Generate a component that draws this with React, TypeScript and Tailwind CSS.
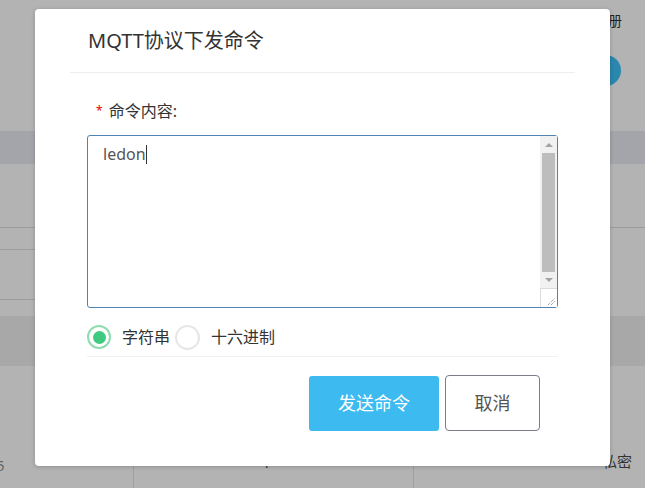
import React from "react";

const font = { fontFamily: '"Noto Sans", "Noto Sans CJK SC", sans-serif' };

export default function App() {
  return (
    <div className="relative w-[645px] h-[488px] overflow-hidden bg-[#b3b3b3]" style={font}>
      {/* background page (dimmed) */}
      <div className="flex flex-col w-full h-full">
        <div className="h-[131px] flex flex-col items-end pr-[23px]">
          <div className="mt-[11px] text-[14px] leading-[20px] text-[#222] mr-0">册</div>
          <div className="mt-[24px] w-[31px] h-[31px] rounded-full bg-[#2a87ae] mr-[1px]" />
        </div>
        <div className="h-[33px] bg-[#a4a5aa]" />
        <div className="h-[64px] border-b border-[#9c9c9c]" />
        <div className="h-[22px] w-[134px] border-b border-[#9c9c9c]" />
        <div className="h-[50px] w-[134px] border-b border-[#9c9c9c]" />
        <div className="h-[16px]" />
        <div className="h-[50px] bg-[#a8a8a8]" />
        <div className="flex-1 flex">
          <div className="w-[134px] border-r border-[#a0a0a0] relative">
            <span className="absolute left-[-4px] top-[88px] text-[15px] text-[#666]">5</span>
          </div>
          <div className="w-[280px] border-r border-[#a0a0a0] relative">
            <span className="absolute left-[128px] top-[85px] text-[15px] text-[#333]">1</span>
          </div>
          <div className="flex-1 relative">
            <span className="absolute left-[188px] top-[84px] text-[15px] text-[#333]">私密</span>
          </div>
        </div>
      </div>

      {/* dialog */}
      <div className="absolute left-[35px] top-[9px] w-[575px] h-[457px] bg-white rounded-[4px] shadow-[0_1px_4px_rgba(0,0,0,0.2)] flex flex-col">
        <div className="h-[63px] flex items-center pl-[53px] text-[20px] text-[#333]">MQTT协议下发命令</div>
        <div className="mx-[35px] border-t border-[#eeeeee]" />
        <div className="px-[52px] flex flex-col">
          <div className="mt-[27px] h-[22px] flex items-center pl-[9px] text-[16px] text-[#333]">
            <span className="text-[#e00] text-[12px] mr-[6px]">*</span>
            <span>命令内容:</span>
          </div>
          <div className="mt-[13px] h-[173px] border border-[#4f82b0] rounded-[3px] flex">
            <div className="flex-1 pl-[15px] pt-[6px] text-[16px] text-[#555] leading-[24px]">
              ledon<span className="inline-block w-px h-[19px] bg-[#333] align-[-4px]" />
            </div>
            <div className="w-[17px] flex flex-col bg-[#f1f1f1]">
              <div className="h-[17px] flex items-center justify-center">
                <div className="w-0 h-0 border-l-[4px] border-r-[4px] border-b-[4px] border-l-transparent border-r-transparent border-b-[#a3a3a3]" />
              </div>
              <div className="mx-[2px] h-[119px] bg-[#bdbdbd]" />
              <div className="h-[16px] flex items-center justify-center">
                <div className="w-0 h-0 border-l-[4px] border-r-[4px] border-t-[4px] border-l-transparent border-r-transparent border-t-[#a3a3a3]" />
              </div>
              <div className="flex-1 bg-white border-l border-t border-[#dcdcdc] relative">
                <svg className="absolute right-[1px] bottom-[1px]" width="10" height="10" viewBox="0 0 10 10">
                  <path d="M2 9 L9 2 M5 9 L9 5" stroke="#777" strokeWidth="1" strokeDasharray="1 1" />
                </svg>
              </div>
            </div>
          </div>
          <div className="mt-[17px] h-[24px] flex items-center text-[16px] text-[#333]">
            <div className="w-[24px] h-[24px] rounded-full border-2 border-[#8edcb0] flex items-center justify-center">
              <div className="w-[13px] h-[13px] rounded-full bg-[#3ecb80]" />
            </div>
            <span className="ml-[11px]">字符串</span>
            <div className="ml-[5px] w-[25px] h-[25px] rounded-full border-2 border-[#e6e6e6]" />
            <span className="ml-[11px]">十六进制</span>
          </div>
          <div className="mt-[7px] border-t border-[#f0f0f0]" />
          <div className="mt-[18px] flex justify-end pr-[18px] items-center">
            <button className="w-[130px] h-[55px] rounded-[3px] bg-[#3dbbf1] text-white text-[18px]">发送命令</button>
            <button className="ml-[6px] w-[95px] h-[56px] rounded-[4px] border border-[#7b7b8a] bg-white text-[#555] text-[18px]">取消</button>
          </div>
        </div>
      </div>
    </div>
  );
}
